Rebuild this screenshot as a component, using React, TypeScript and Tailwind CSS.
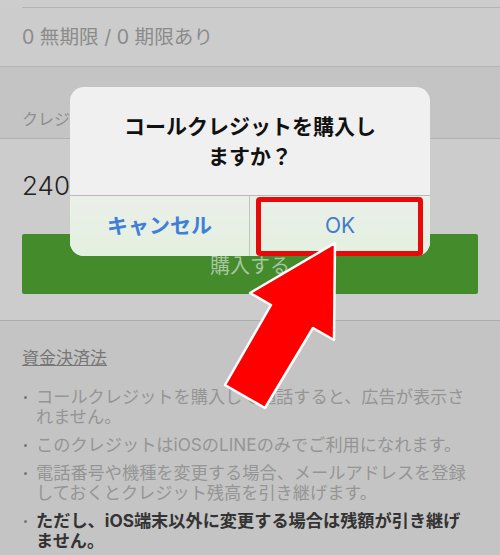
const Bullet = () => <span className="mt-[9px] ml-[2px] h-[3px] w-[3px] shrink-0 rounded-full bg-[#777777]" />;

export default function App() {
  const jp = "font-['Inter','Noto_Sans_CJK_JP',sans-serif]";
  return (
    <div className={`relative h-[555px] w-[500px] overflow-hidden bg-[#c4c4c4] ${jp}`}>
      <div className="h-[9px] bg-[#cdcdcd] pl-[22px]">
        <div className="h-[8px] border-b border-[#b4b4b4]" />
      </div>
      <div className="flex h-[58px] items-center border-b border-[#b4b4b4] bg-[#cccccc] pl-[22px] text-[19.6px] text-[#8b8b8b]">
        0 無期限 / 0 期限あり
      </div>
      <div className="flex h-[72px] items-end border-b border-[#b0b0b0] bg-[#c4c4c4] pb-[7px] pl-[22px] text-[16px] leading-[24px] text-[#8f8f8f]">
        クレジット
      </div>
      <div className="h-[182px] border-b border-[#acacac] bg-[#cccccc] px-[22px]">
        <div className="pt-[31px] text-[26px] leading-[32px] font-light text-[#222222]">240</div>
        <div className="mt-[32px] flex h-[60px] items-center justify-center rounded-[2px] bg-[#448b2c] pt-[3px] text-[20px] text-[#a9c6a0]">
          購入する
        </div>
      </div>
      <div className="pt-[25px] pr-[32px] pl-[22px]">
        <div className="text-[17px] leading-[24px] text-[#777777] underline">資金決済法</div>
        <ul className="mt-[17px] flex flex-col gap-[8px] text-[17.2px] leading-[20px] text-[#959595]">
          <li className="flex gap-[9px]">
            <Bullet />
            <span>コールクレジットを購入して通話すると、広告が表示されません。</span>
          </li>
          <li className="flex gap-[9px]">
            <Bullet />
            <span>このクレジットはiOSのLINEのみでご利用になれます。</span>
          </li>
          <li className="flex gap-[9px]">
            <Bullet />
            <span>電話番号や機種を変更する場合、メールアドレスを登録しておくとクレジット残高を引き継げます。</span>
          </li>
          <li className="flex gap-[9px]">
            <Bullet />
            <span className="font-bold text-[#333333]">ただし、iOS端末以外に変更する場合は残額が引き継げません。</span>
          </li>
        </ul>
      </div>

      <div className="absolute top-[87px] left-[70px] flex h-[169px] w-[360px] flex-col overflow-hidden rounded-[14px] bg-[#f0f0f0]">
        <div className="flex h-[109px] items-start justify-center border-b border-[#b9b9b9] px-[50px] pt-[25px] text-center text-[21px] leading-[30px] font-bold text-[#111111]">
          コールクレジットを購入しますか？
        </div>
        <div className="flex flex-1 bg-gradient-to-b from-[#ebefe9] to-[#e3f0df]">
          <div className="flex w-[180px] items-center justify-center border-r border-[#c2c6c0] text-[21px] font-bold text-[#3f7fd9]">
            キャンセル
          </div>
          <div className="flex flex-1 items-center justify-center text-[21px] text-[#3f7cc9]">OK</div>
        </div>
      </div>

      <div className="absolute top-[197px] left-[256px] h-[59px] w-[167px] rounded-[4px] border-[5px] border-[#e60a0a]" />

      <svg className="absolute top-0 left-0" width="500" height="555" viewBox="0 0 500 555">
        <polygon
          points="335,243 334,340 313,328 265,408 225,385 271,305 250,293"
          fill="#fe0000"
          stroke="#ffffff"
          strokeWidth="2.5"
          strokeLinejoin="round"
        />
      </svg>
    </div>
  );
}
